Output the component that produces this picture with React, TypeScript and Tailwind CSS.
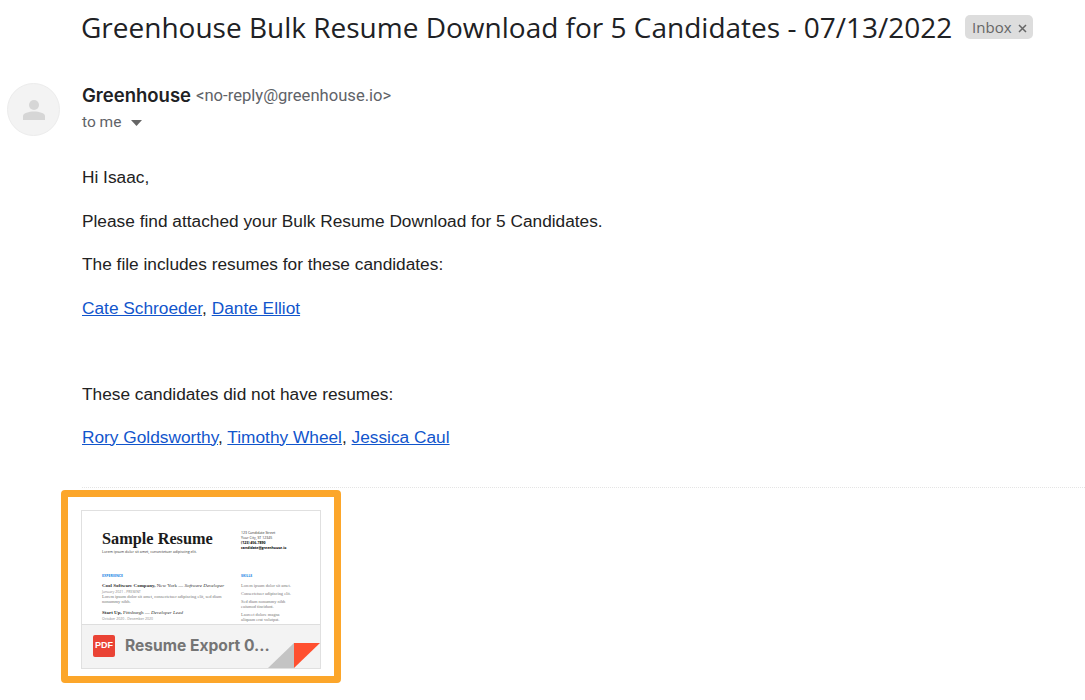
const sans = { fontFamily: '"Liberation Sans", Arial, sans-serif' };

function ResumePreview() {
  return (
    <div className="h-[159px] w-[240px] border border-[#e0e0e0] bg-white relative overflow-hidden">
      <div className="flex pl-[20px] pt-[19px]">
        <div className="w-[139px] shrink-0">
          <div className="text-[16.3px] leading-[18px] font-bold text-[#1b1b1b] font-['Liberation_Serif',serif] whitespace-nowrap">Sample Resume</div>
          <div className="text-[3.6px] leading-[6px] mt-[1px] text-[#333] font-['Open_Sans',sans-serif] whitespace-nowrap">Lorem ipsum dolor sit amet, consectetuer adipiscing elit.</div>
          <div className="text-[3.5px] leading-[5px] mt-[18px] font-bold text-[#1e88e5] font-['Open_Sans',sans-serif]">EXPERIENCE</div>
          <div className="text-[5px] leading-[7px] mt-[4px] text-[#333] font-['Liberation_Serif',serif] whitespace-nowrap"><b>Cool Software Company,</b> New York — <i>Software Developer</i></div>
          <div className="text-[3.5px] leading-[5px] text-[#888] font-['Open_Sans',sans-serif]">January 2021 - PRESENT</div>
          <div className="text-[4.5px] leading-[5px] text-[#777] font-['Liberation_Serif',serif] whitespace-nowrap">Lorem ipsum dolor sit amet, consectetuer adipiscing elit, sed diam<br />nonummy nibh.</div>
          <div className="text-[5px] leading-[7px] mt-[5px] text-[#333] font-['Liberation_Serif',serif] whitespace-nowrap"><b>Start Up,</b> Pittsburgh — <i>Developer Lead</i></div>
          <div className="text-[3.5px] leading-[5px] text-[#888] font-['Open_Sans',sans-serif]">October 2020 - December 2020</div>
        </div>
        <div className="w-[80px] shrink-0">
          <div className="text-[3.5px] leading-[5px] text-[#333] font-['Open_Sans',sans-serif] whitespace-nowrap">
            <div>123 Candidate Street</div>
            <div>Your City, ST 12345</div>
            <div className="font-bold text-black">(123) 456-7890</div>
            <div className="font-bold text-black">candidate@greenhouse.io</div>
          </div>
          <div className="text-[3.5px] leading-[5px] mt-[23px] font-bold text-[#1e88e5] font-['Open_Sans',sans-serif]">SKILLS</div>
          <div className="text-[4.4px] leading-[5px] mt-[5px] flex flex-col gap-[3px] text-[#777] font-['Liberation_Serif',serif]">
            <div>Lorem ipsum dolor sit amet.</div>
            <div>Consectetuer adipiscing elit.</div>
            <div>Sed diam nonummy nibh<br />euismod tincidunt.</div>
            <div>Laoreet dolore magna<br />aliquam erat volutpat.</div>
          </div>
        </div>
      </div>
      {/* filename strip */}
      <div className="absolute left-0 right-0 bottom-0 h-[44px] bg-[#f3f3f3] border-t border-[#dedede] flex items-center pl-[11px]">
        <div className="w-[22px] h-[22px] rounded-[2px] bg-[#ea4335] flex items-center justify-center text-white text-[9px] font-bold font-['Liberation_Sans',sans-serif]">PDF</div>
        <span className="ml-[10px] text-[15.6px] font-bold text-[#757575] font-['Inter',sans-serif] whitespace-nowrap">Resume Export 0...</span>
        <svg className="absolute right-0 bottom-0" width="52" height="25" viewBox="0 0 52 25">
          <path d="M0 25 L26 0 V25 Z" fill="#c4c4c4" />
          <path d="M26 0 H52 L26 25 Z" fill="#ff5030" />
        </svg>
      </div>
    </div>
  );
}

export default function App() {
  return (
    <div className="w-[1085px] h-[700px] bg-white overflow-hidden text-[#222]" style={sans}>
      <div className="pl-[81px] pt-[9px] flex items-center h-[36px] box-content">
        <h1 className="text-[28px] leading-[36px] text-[#202124] font-['Open_Sans',sans-serif] whitespace-nowrap">Greenhouse Bulk Resume Download for 5 Candidates - 07/13/2022</h1>
        <span className="ml-[13px] h-[24px] w-[68px] rounded-[5px] bg-[#dddddd] text-[#666] flex items-center justify-center gap-[6px] text-[15px] font-['Open_Sans',sans-serif]">
          Inbox
          <svg width="9" height="9" viewBox="0 0 9 9" className="mt-[2px]"><path d="M1 1 L8 8 M8 1 L1 8" stroke="#666" strokeWidth="1.5" /></svg>
        </span>
      </div>

      <div className="flex pl-[7px] pt-[38px]">
        <div className="w-[53px] h-[53px] rounded-full bg-[#f3f3f3] border border-[#ececec] flex items-center justify-center shrink-0">
          <svg width="24" height="24" viewBox="0 0 24 24">
            <circle cx="12" cy="7" r="5" fill="#d6d6d6" />
            <path d="M1 22 V18 C1 15 7 13.5 12 13.5 C17 13.5 23 15 23 18 V22 Z" fill="#d6d6d6" />
          </svg>
        </div>
        <div className="ml-[22px]">
          <div className="h-[26px] flex items-center whitespace-nowrap">
            <span className="text-[18.5px] font-semibold text-[#202124] font-['Inter',sans-serif]">Greenhouse</span>
            <span className="ml-[5px] text-[16.6px] text-[#5f6368] font-['Roboto',sans-serif]">&lt;no-reply@greenhouse.io&gt;</span>
          </div>
          <div className="h-[27px] flex items-center text-[15.5px] text-[#5f6368] font-['Roboto',sans-serif]">
            to me
            <svg width="11" height="6" viewBox="0 0 11 6" className="ml-[10px]"><path d="M0 0 H11 L5.5 6 Z" fill="#666" /></svg>
          </div>
        </div>
      </div>

      <div className="pl-[82px] pt-[30px] text-[17.3px] leading-[22px] text-[#222] flex flex-col gap-[21.5px]">
        <p>Hi Isaac,</p>
        <p>Please find attached your Bulk Resume Download for 5 Candidates.</p>
        <p>The file includes resumes for these candidates:</p>
        <p><a className="text-[#1155cc] underline">Cate Schroeder</a>, <a className="text-[#1155cc] underline">Dante Elliot</a></p>
        <p className="mt-[43px]">These candidates did not have resumes:</p>
        <p className="mt-[-1px]"><a className="text-[#1155cc] underline">Rory Goldsworthy</a>, <a className="text-[#1155cc] underline">Timothy Wheel</a>, <a className="text-[#1155cc] underline">Jessica Caul</a></p>
      </div>

      <div className="ml-[82px] mt-[39px] border-t border-dotted border-[#e4e4e4]" />

      <div className="ml-[61px] mt-[2px] w-[280px] h-[193px] border-[7px] border-[#fca62a] rounded-[4px] pl-[13px] pt-[13px]">
        <ResumePreview />
      </div>
    </div>
  );
}
